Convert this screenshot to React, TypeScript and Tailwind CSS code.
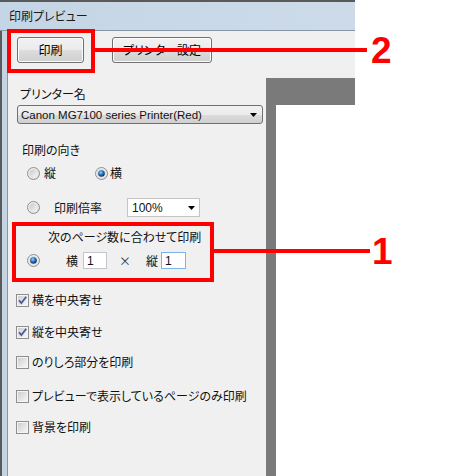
import { useId } from "react";

const jp = "font-['Noto_Sans_CJK_JP',sans-serif] [font-feature-settings:'palt']";

function Radio({ checked = false }: { checked?: boolean }) {
	const id = useId().replace(/:/g, "");
	return (
		<svg width="13" height="13" viewBox="0 0 13 13" className="shrink-0">
			<defs>
				<linearGradient id={`o${id}`} x1="0" y1="0" x2="1" y2="1">
					<stop offset="0" stopColor="#f4f4f4" />
					<stop offset="1" stopColor="#dcdcdc" />
				</linearGradient>
				<linearGradient id={`i${id}`} x1="0" y1="0" x2="1" y2="1">
					<stop offset="0" stopColor="#c9c9c9" />
					<stop offset="1" stopColor="#f7f7f7" />
				</linearGradient>
				<radialGradient id={`d${id}`} cx="40%" cy="35%" r="65%">
					<stop offset="0" stopColor="#9fd8ff" />
					<stop offset="0.45" stopColor="#2a7fd0" />
					<stop offset="1" stopColor="#0b2e5a" />
				</radialGradient>
			</defs>
			<circle cx="6.5" cy="6.5" r="6" fill={`url(#o${id})`} stroke="#8e8f8f" />
			<circle cx="6.5" cy="6.5" r="4.2" fill={`url(#i${id})`} />
			{checked && <circle cx="6.5" cy="6.5" r="3.3" fill={`url(#d${id})`} />}
		</svg>
	);
}

function Check({ checked = false }: { checked?: boolean }) {
	const id = useId().replace(/:/g, "");
	return (
		<svg width="13" height="13" viewBox="0 0 13 13" className="shrink-0">
			<defs>
				<linearGradient id={`c${id}`} x1="0" y1="0" x2="1" y2="1">
					<stop offset="0" stopColor="#cfcfcf" />
					<stop offset="1" stopColor="#f6f6f6" />
				</linearGradient>
			</defs>
			<rect x="0.5" y="0.5" width="12" height="12" fill="#f4f4f4" stroke="#8e8f8f" />
			<rect x="2" y="2" width="9" height="9" fill={`url(#c${id})`} />
			{checked && (
				<path d="M3 6.3 L5.4 9 L10.2 2.8" fill="none" stroke="#4a5d9a" strokeWidth="1.8" />
			)}
		</svg>
	);
}

function Arrow() {
	return (
		<svg width="7" height="4" viewBox="0 0 7 4" className="shrink-0">
			<path d="M0 0 H7 L3.5 4 Z" fill="#000" />
		</svg>
	);
}

function WinButton({ label, width }: { label: string; width: string }) {
	return (
		<div
			className={`${width} flex h-[26px] items-center justify-center rounded-[3px] border border-[#707070] bg-[linear-gradient(#f2f2f2_0%,#ebebeb_50%,#dddddd_50%,#cfcfcf_100%)] text-[12px] text-black shadow-[inset_0_0_0_1px_#fcfcfc]`}
		>
			{label}
		</div>
	);
}

function CheckRow({ label, checked, mt }: { label: string; checked?: boolean; mt: string }) {
	return (
		<div className={`${mt} flex h-4 items-center gap-[3px] pl-2`}>
			<Check checked={checked} />
			<span>{label}</span>
		</div>
	);
}

export default function App() {
	return (
		<div className={`relative h-[476px] w-[470px] overflow-hidden bg-white text-[12px] leading-4 text-[#111] ${jp}`}>
			<div className="flex h-full w-[355px] flex-col">
				{/* title bar */}
				<div className="flex h-[31px] shrink-0 items-center border-t-2 border-b border-t-[#5a5a5a] border-b-[#8796a6] bg-[linear-gradient(90deg,#c4d5e5,#cddbe8)] pl-[9px] text-[12px] text-[#1a1a1a]">
					印刷プレビュー
				</div>
				<div className="flex min-h-0 flex-1">
					{/* left frame */}
					<div className="w-2 shrink-0 border-l-2 border-r border-l-[#5a5a5a] border-r-[#8796a6] bg-[#c4d4e3]" />
					<div className="flex min-w-0 flex-1 flex-col bg-[#f0f0f0]">
						{/* toolbar */}
						<div className="flex h-[47px] shrink-0 gap-[28px] pl-[9px] pt-[6px]">
							<WinButton label="印刷" width="w-[67px]" />
							<WinButton label="プリンター設定" width="w-[100px]" />
						</div>
						<div className="flex min-h-0 flex-1">
							{/* settings panel */}
							<div className="flex w-[258px] shrink-0 flex-col">
								<div className="mt-2 pl-3">プリンター名</div>
								<div className="ml-[9px] mt-[3px] flex h-[19px] w-[246px] items-center justify-between rounded-[3px] border border-[#707070] bg-[linear-gradient(#f2f2f2_0%,#ebebeb_50%,#dddddd_50%,#cfcfcf_100%)] pl-[3px] pr-[5px] font-['Liberation_Sans',sans-serif] text-[11.5px]">
									<span>Canon MG7100 series Printer(Red)</span>
									<Arrow />
								</div>
								<div className="mt-[18px] pl-[14px]">印刷の向き</div>
								<div className="mt-[7px] flex h-4 items-center pl-[19px]">
									<Radio />
									<span className="ml-1">縦</span>
									<div className="ml-[39px]">
										<Radio checked />
									</div>
									<span className="ml-[2px]">横</span>
								</div>
								<div className="mt-[17px] flex h-[19px] items-center pl-[19px]">
									<Radio />
									<span className="ml-[14px]">印刷倍率</span>
									<div className="ml-[25px] flex h-[19px] w-[73px] items-center justify-between border border-[#c4c4c4] bg-white pl-[4px] pr-[4px] font-['Liberation_Sans',sans-serif]">
										<span>100%</span>
										<Arrow />
									</div>
								</div>
								<div className="mt-3 pl-10">次のページ数に合わせて印刷</div>
								<div className="mt-[7px] flex h-[17px] items-center pl-[19px]">
									<Radio checked />
									<span className="ml-[26px]">横</span>
									<div className="ml-[5px] flex h-[17px] w-[24px] items-center border border-[#c2c5cc] bg-white pl-[3px] font-['Liberation_Sans',sans-serif]">
										1
									</div>
									<span className="ml-[12px] text-[#333]">×</span>
									<span className="ml-[15px]">縦</span>
									<div className="ml-[3px] flex h-[17px] w-[25px] items-center border border-[#7eb4ea] bg-white pl-[3px] font-['Liberation_Sans',sans-serif]">
										1
									</div>
								</div>
								<CheckRow label="横を中央寄せ" checked mt="mt-[23px]" />
								<CheckRow label="縦を中央寄せ" checked mt="mt-4" />
								<CheckRow label="のりしろ部分を印刷" mt="mt-[14px]" />
								<CheckRow label="プレビューで表示しているページのみ印刷" mt="mt-[18px]" />
								<CheckRow label="背景を印刷" mt="mt-[15px]" />
							</div>
							{/* preview */}
							<div className="flex flex-1 flex-col bg-[#7a7a7a] pl-[10px] pt-[27px]">
								<div className="flex-1 bg-white" />
							</div>
						</div>
					</div>
				</div>
			</div>

			{/* annotations */}
			<div className="absolute left-[7px] top-[29px] h-[44px] w-[88px] border-4 border-[#ff0000]" />
			<div className="absolute left-[95px] top-[48px] h-1 w-[272px] bg-[#ff0000]" />
			<div className="absolute left-[371px] top-[29px] font-['Liberation_Sans',sans-serif] text-[37px] font-bold leading-[44px] text-[#ff0000]">
				2
			</div>
			<div className="absolute left-[12px] top-[222px] h-[60px] w-[202px] border-4 border-[#ff0000]" />
			<div className="absolute left-[214px] top-[249px] h-1 w-[156px] bg-[#ff0000]" />
			<div className="absolute left-[372px] top-[230px] font-['Liberation_Sans',sans-serif] text-[37px] font-bold leading-[44px] text-[#ff0000]">
				1
			</div>
		</div>
	);
}
